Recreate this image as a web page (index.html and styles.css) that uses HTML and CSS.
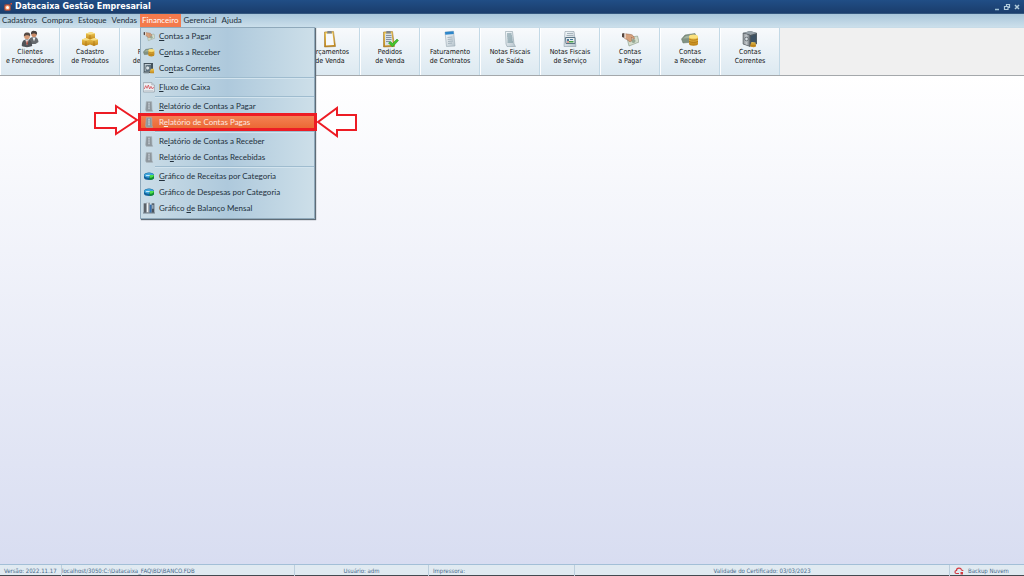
FILE: index.html
```html
<!DOCTYPE html>
<html lang="pt-BR">
<head>
    <meta charset="UTF-8">
    <meta name="viewport" content="width=device-width, initial-scale=1.0">
    <title>Datacaixa Gestão Empresarial</title>
    <link rel="stylesheet" href="styles.css">
</head>
<body>

<!-- Icons -->
<svg class="sprite" aria-hidden="true">
    <defs>
        <linearGradient id="gold" x1="0" y1="0" x2="0" y2="1">
            <stop offset="0" stop-color="#f3cd58"/>
            <stop offset="1" stop-color="#bf8418"/>
        </linearGradient>
        <linearGradient id="steel" x1="0" y1="0" x2="1" y2="0">
            <stop offset="0" stop-color="#8d9297"/>
            <stop offset="0.5" stop-color="#c3c8cc"/>
            <stop offset="1" stop-color="#696f75"/>
        </linearGradient>
        <linearGradient id="page" x1="0" y1="0" x2="1" y2="1">
            <stop offset="0" stop-color="#f8fbfd"/>
            <stop offset="1" stop-color="#b5c3cc"/>
        </linearGradient>
    </defs>
    <symbol id="i-people" viewBox="0 0 18 18">
        <path d="M7.500 12C8 8 10 7 13 7s4 1.500 4.500 5l-3 2H8z" fill="#66696d"/>
        <path d="M11.500 7.500l1.500 4 1.500-4z" fill="#eef2f4"/>
        <circle cx="13" cy="4.500" r="2.600" fill="#c98a66"/>
        <path d="M10 4.500C9.500 1 12 .5 13.500 1c2.500 0 3 2 2.300 4C15 3.500 12 3 10 4.500z" fill="#48403c"/>
        <path d="M.8 16c0-4.500 1.500-6.500 5-6.500s5.200 2 5.400 6.500c-3 1.500-7.500 1.500-10.400 0z" fill="#505358"/>
        <path d="M4.500 10l1.500 5.500L7.500 10z" fill="#f4f6f7"/>
        <path d="M5.700 10.500h.8l.4 3-.8 2-.8-2z" fill="#a43c2e"/>
        <circle cx="6" cy="6.500" r="2.800" fill="#d69b77"/>
        <path d="M2.900 6.500C2.500 3 4.500 2 6.500 2.500c2.500 0 3.200 2 2.500 4C8 5 5 4.500 2.900 6.500z" fill="#544944"/>
    </symbol>
    <symbol id="i-boxes" viewBox="0 0 18 18">
        <path d="M5 3.500l5-1.500 4 1.500v5L9 10 5 8.500z" fill="url(#gold)"/>
        <path d="M5 3.500l4 1.300 5-1.300-4-1.500z" fill="#f8df86"/>
        <path d="M9 4.800V10" stroke="#a66c0a" stroke-width=".6"/>
        <path d="M1 9.500L5 8l4 1.500v5L5 16l-4-1.500z" fill="url(#gold)"/>
        <path d="M1 9.500l4 1.200 4-1.200L5 8z" fill="#f8df86"/>
        <path d="M9 9.500L13.500 8 17 9.500v5L13 16l-4-1.500z" fill="url(#gold)"/>
        <path d="M9 9.500l4 1.200 4-1.200L13.500 8z" fill="#f8df86"/>
        <path d="M5 10.700V16M13 10.700V16" stroke="#a66c0a" stroke-width=".6"/>
    </symbol>
    <symbol id="i-clipboard" viewBox="0 0 18 18">
        <path d="M3.500 2l9-.5 2 15-11 .5z" fill="url(#gold)" stroke="#94691c" stroke-width=".5"/>
        <path d="M5 3.500l6.500-.3 1.500 11.800-8 .5z" fill="#f7f9fb"/>
        <path d="M6.500 1h4l.5 2.500H6z" fill="#80858a"/>
    </symbol>
    <symbol id="i-order" viewBox="0 0 18 18">
        <path d="M2.500 2l9-.5 2 15-11 .5z" fill="url(#gold)" stroke="#94691c" stroke-width=".5"/>
        <path d="M4 3.500l6.500-.3 1.500 11.800-8 .5z" fill="#d8e0e6"/>
        <path d="M5 5.500h5.500M5 7.500h5.500M5 9.500h5.500M5 11.500h4" stroke="#8793a0"/>
        <path d="M5.500 1h4l.5 2.500H5z" fill="#80858a"/>
        <path d="M7.500 13l2-1.500 2 2L16 9l1.500 1.500-6 6.500z" fill="#43c42c" stroke="#238a17" stroke-width=".5"/>
    </symbol>
    <symbol id="i-contract" viewBox="0 0 18 18">
        <path d="M4 2l8.500-.8 1.500 14.800-8.500.5z" fill="url(#page)" stroke="#9aa9b4" stroke-width=".6"/>
        <path d="M4 2l8.500-.8.3 2.800-8.500.8z" fill="#2d86ca"/>
        <path d="M6.500 7.500l5-.5M6.700 9.500l5-.5M7 11.500l5-.5M7 13.500l4-.4" stroke="#9babb6" stroke-width=".8"/>
    </symbol>
    <symbol id="i-invoice" viewBox="0 0 18 18">
        <path d="M4.500 1.500h7L13 14l1.500 2.500H6L5 14z" fill="url(#page)" stroke="#8fa1aa" stroke-width=".6"/>
        <path d="M6 4h4.500M6 6h5M6.300 8h5M6.500 10h5M6.500 12h5.500" stroke="#668892"/>
    </symbol>
    <symbol id="i-service" viewBox="0 0 18 18">
        <path d="M4 1.500h9l2 15H3z" fill="url(#page)" stroke="#8e9da8" stroke-width=".6"/>
        <path d="M6 3.500h6M5.500 5.500h7" stroke="#a7b4bc"/>
        <path d="M4.500 7.500h9.500v6H5z" fill="#e9eff2" stroke="#5b7585"/>
        <path d="M6 9h2v2H6zM9 9h3v1H9z" fill="#47799c"/>
        <path d="M8 11h4.500v1.500H8z" fill="#4aa24b"/>
        <path d="M6 11.500h2v1H6z" fill="#c84a3c"/>
    </symbol>
    <symbol id="i-pay" viewBox="0 0 18 18">
        <path d="M6 8l10.500-2L18 12l-10 4z" fill="#d5dfcf" stroke="#849583" stroke-width=".6"/>
        <circle cx="12.500" cy="11" r="2" fill="#96a994"/>
        <path d="M3.500 3.500L6 4l4 .5c2 .5 3 2 3.500 4l-1 .5-2-2 .5 3.500-2 1.500-3-2.500-2.500-1z" fill="#d6a17c" stroke="#936248" stroke-width=".5"/>
        <path d="M1 3.500l2.500-.5v5L1 7z" fill="#54463f"/>
        <path d="M3.500 3h1v5.500h-1z" fill="#fff"/>
    </symbol>
    <symbol id="i-receive" viewBox="0 0 18 18">
        <path d="M.5 9L4 5l10-1.500 2 4L12 12l-10 1z" fill="#819283" stroke="#607161" stroke-width=".5"/>
        <path d="M2 8.500l3-2.500 8-1-2.500 3z" fill="#a3b29e"/>
        <ellipse cx="12.500" cy="13.500" rx="4.500" ry="2.200" fill="#bd8010"/>
        <path d="M8 6.500h9v7c-2 2-7 2-9 0z" fill="url(#gold)"/>
        <path d="M8 9c2 1.500 7 1.500 9 0M8 11.300c2 1.500 7 1.500 9 0" stroke="#a76c0c" stroke-width=".7" fill="none"/>
        <ellipse cx="12.500" cy="6.500" rx="4.500" ry="2" fill="#fae17e"/>
    </symbol>
    <symbol id="i-safe" viewBox="0 0 18 18">
        <path d="M2 3l7-2 7 2v11l-7 2.500L2 14z" fill="#505a61"/>
        <path d="M2 3l7-2 7 2-7 2z" fill="#99a3aa"/>
        <path d="M2 3l7 2v11.500L2 14z" fill="url(#steel)" stroke="#42494f" stroke-width=".5"/>
        <path d="M10 6l5-1.500V13l-5 2z" fill="#3c5163"/>
        <circle cx="5.500" cy="9" r="1.800" fill="#dbe1e5" stroke="#4d565d" stroke-width=".7"/>
        <path d="M9 16l1.500-4 4 .5.5 4c-1.500 1-4.500 1-6-.5z" fill="url(#gold)"/>
        <path d="M9.500 14h5M9 15.500h6" stroke="#a76c0c" stroke-width=".5"/>
    </symbol>
    <symbol id="i-account" viewBox="0 0 18 18">
        <path d="M1 1.500h14v15H1z" fill="#43525c"/>
        <path d="M2.500 3h9.500v11H2.500z" fill="#c0ccd2"/>
        <path d="M4 5l8-1v9l-8 1z" fill="#5b707e"/>
        <circle cx="7" cy="9" r="3" fill="#d7e1e6" stroke="#5e6b73"/>
        <path d="M12 10h4.500v7H11l-1-2z" fill="url(#gold)"/>
        <path d="M1 15h8v2H1z" fill="#78868e"/>
    </symbol>
    <symbol id="i-flow" viewBox="0 0 18 18">
        <path d="M.5 2.500h12.500l4 3.500v10.500H.5z" fill="#edf0f3" stroke="#8a949f"/>
        <path d="M13 2.500V6h4" fill="#cbd3da" stroke="#8a949f" stroke-width=".6"/>
        <path d="M2 12l2-5 2 4 2-5 2 6 2-4 2 4 2-3" fill="none" stroke="#d4525a" stroke-width="1.200"/>
        <path d="M2 14.500h13" stroke="#9ba8b5" stroke-width=".8"/>
    </symbol>
    <symbol id="i-report" viewBox="0 0 18 18">
        <path d="M5 2.500h8l.5 12 1 2.500H5l-1-2z" fill="#8d969c" stroke="#a3adb4" stroke-width="1"/>
        <path d="M7.500 4h3v10h-3z" fill="#bac3c9"/>
        <path d="M7 6.500h4M7 9h4M7 11.500h4" stroke="#8b959c" stroke-width=".8"/>
    </symbol>
    <symbol id="i-pie" viewBox="0 0 18 18">
        <path d="M1.500 8c0-5.500 15-5.500 15 0v3.500c0 4.500-15 4.500-15 0z" fill="#12629b"/>
        <path d="M2 8c0-4.500 14-4.500 14 0l-7 3.500C5 11.500 2 10 2 8z" fill="#42a8de"/>
        <path d="M10 8h6.500v3.500c0 2-2.500 3.200-6.500 3.500z" fill="#128c31"/>
        <path d="M10 7.500h6.500c0 2.500-2.500 4-5.500 4.500z" fill="#4ee04c"/>
        <path d="M4 9h6V7.500H5z" fill="#c5eafb"/>
    </symbol>
    <symbol id="i-balance" viewBox="0 0 18 18">
        <path d="M1 2h4v14H1z" fill="#5b6269"/>
        <path d="M5 1h5v15H5z" fill="url(#steel)"/>
        <path d="M6 2h1.500v13H6z" fill="#eef3f6"/>
        <path d="M10 4h3v12h-3z" fill="#3470b1"/>
        <path d="M13 2h4v14h-4z" fill="#4a545e"/>
        <path d="M13.800 4h2v6h-2z" fill="#a9bdcd"/>
        <path d="M0 16h18v1H0z" fill="#424b54"/>
    </symbol>
</svg>

<div class="app">
    <header class="titlebar">
        <svg class="logo" viewBox="0 0 10 10" aria-hidden="true">
            <rect x="1" y="2" width="7" height="7" rx="2" fill="#8d4a48"/>
            <circle cx="4.500" cy="5.500" r="2.600" fill="#f08a5c"/>
            <circle cx="4.500" cy="5.500" r="1.500" fill="#fff"/>
            <path d="M7.500 1h1.500v1.500H7.500z" fill="#dd4c30"/>
        </svg>
        <h1>Datacaixa Gestão Empresarial</h1>
        <div class="window-buttons">
            <button type="button" aria-label="Minimizar"><svg viewBox="0 0 8 8"><path d="M2 6.500h4" stroke="#9ec0d4" stroke-width="1.500"/></svg></button>
            <button type="button" aria-label="Restaurar"><svg viewBox="0 0 8 8"><path d="M3.500 3V1.500h3v3H5.500M1.500 3.500h3.500v3H1.500z" fill="none" stroke="#b1cbdb" stroke-width="1.200"/></svg></button>
            <button type="button" aria-label="Fechar"><svg viewBox="0 0 8 8"><path d="M2 2l4 4M6 2L2 6" stroke="#b1cbdb" stroke-width="1.500"/></svg></button>
        </div>
    </header>

    <nav class="menubar">
        <ul>
            <li><button type="button">Cadastros</button></li>
            <li><button type="button">Compras</button></li>
            <li><button type="button">Estoque</button></li>
            <li><button type="button">Vendas</button></li>
            <li class="open">
                <button type="button" aria-expanded="true">Financeiro</button>
                <ul class="dropdown">
                    <li><button type="button"><svg><use href="#i-pay"/></svg><span><u>C</u>ontas a Pagar</span></button></li>
                    <li><button type="button"><svg><use href="#i-receive"/></svg><span>C<u>o</u>ntas a Receber</span></button></li>
                    <li><button type="button"><svg><use href="#i-account"/></svg><span>Co<u>n</u>tas Correntes</span></button></li>
                    <li class="separator"></li>
                    <li><button type="button"><svg><use href="#i-flow"/></svg><span><u>F</u>luxo de Caixa</span></button></li>
                    <li class="separator"></li>
                    <li><button type="button"><svg><use href="#i-report"/></svg><span><u>R</u>elatório de Contas a Pagar</span></button></li>
                    <li class="selected">
                        <button type="button"><svg><use href="#i-report"/></svg><span>R<u>e</u>latório de Contas Pagas</span></button>
                        <svg class="arrow arrow-left" viewBox="0 0 46 34" aria-hidden="true"><path d="M2 9h21V2l21 14-21 14v-6H2z"/></svg>
                        <svg class="arrow arrow-right" viewBox="0 0 42 34" aria-hidden="true"><path d="M40 11v15H21v6L2 18 21 4v7z"/></svg>
                    </li>
                    <li class="separator"></li>
                    <li><button type="button"><svg><use href="#i-report"/></svg><span>Re<u>l</u>atório de Contas a Receber</span></button></li>
                    <li><button type="button"><svg><use href="#i-report"/></svg><span>Rel<u>a</u>tório de Contas Recebidas</span></button></li>
                    <li class="separator"></li>
                    <li><button type="button"><svg><use href="#i-pie"/></svg><span><u>G</u>ráfico de Receitas por Categoria</span></button></li>
                    <li><button type="button"><svg><use href="#i-pie"/></svg><span>Gráf<u>i</u>co de Despesas por Categoria</span></button></li>
                    <li><button type="button"><svg><use href="#i-balance"/></svg><span>Gráfico <u>d</u>e Balanço Mensal</span></button></li>
                </ul>
            </li>
            <li><button type="button">Gerencial</button></li>
            <li><button type="button">Ajuda</button></li>
        </ul>
    </nav>

    <div class="toolbar">
        <button type="button"><svg><use href="#i-people"/></svg>Clientes<br>e Fornecedores</button>
        <button type="button"><svg><use href="#i-boxes"/></svg>Cadastro<br>de Produtos</button>
        <button type="button"><svg><use href="#i-order"/></svg>Pedidos<br>de Compra</button>
        <button type="button" aria-label="Notas de Entrada"><svg><use href="#i-invoice"/></svg></button>
        <button type="button" aria-label="Controle de Estoque"><svg><use href="#i-boxes"/></svg></button>
        <button type="button"><svg><use href="#i-clipboard"/></svg>Orçamentos<br>de Venda</button>
        <button type="button"><svg><use href="#i-order"/></svg>Pedidos<br>de Venda</button>
        <button type="button"><svg><use href="#i-contract"/></svg>Faturamento<br>de Contratos</button>
        <button type="button"><svg><use href="#i-invoice"/></svg>Notas Fiscais<br>de Saída</button>
        <button type="button"><svg><use href="#i-service"/></svg>Notas Fiscais<br>de Serviço</button>
        <button type="button"><svg><use href="#i-pay"/></svg>Contas<br>a Pagar</button>
        <button type="button"><svg><use href="#i-receive"/></svg>Contas<br>a Receber</button>
        <button type="button"><svg><use href="#i-safe"/></svg>Contas<br>Correntes</button>
    </div>

    <main class="workspace"></main>

    <footer class="statusbar">
        <span class="version">Versão: 2022.11.17</span>
        <span class="database">localhost/3050:C:\Datacaixa_FAQ\BD\BANCO.FDB</span>
        <span class="user">Usuário: adm</span>
        <span class="printer">Impressora:</span>
        <span class="certificate">Validade do Certificado: 03/03/2023</span>
        <a class="backup" href="#">
            <svg viewBox="0 0 10 8" aria-hidden="true"><path d="M5 6.500H2.500C.5 6.500.5 3.500 2.500 3.500 2.500.5 7 .5 7.500 3c1 0 1.500.5 1.500 1" fill="none" stroke="#d33a41" stroke-width="1.200"/><path d="M6.500 5H9v2.500H6.500z" fill="#d33a41"/></svg>
            Backup Nuvem
        </a>
    </footer>
</div>

</body>
</html>
```
FILE: styles.css
```css
* {
    box-sizing: border-box;
}

body {
    margin: 0;
    font-family: Lato, "Open Sans", sans-serif;
    font-size: 8px;
    color: #22303c;
}

button {
    margin: 0;
    padding: 0;
    border: none;
    background: none;
    font: inherit;
    color: inherit;
    cursor: pointer;
}

ul {
    margin: 0;
    padding: 0;
    list-style: none;
}

.sprite {
    position: absolute;
    width: 0;
    height: 0;
}

.app {
    display: flex;
    flex-direction: column;
    min-height: 100vh;
}

/* Title bar */
.titlebar {
    display: flex;
    align-items: center;
    gap: 2px;
    height: 14px;
    padding: 0 3px;
    background: linear-gradient(#214e86, #1a3d6c);
    border-bottom: 1px solid #33577f;
    color: #fff;
}

.titlebar h1 {
    flex: 1;
    margin: 0;
    font-family: "DejaVu Sans", sans-serif;
    font-size: 8px;
    line-height: 12px;
}

.logo {
    width: 10px;
    height: 10px;
}

.window-buttons {
    display: flex;
    gap: 2px;
}

.window-buttons button,
.window-buttons svg {
    display: block;
    width: 8px;
    height: 8px;
}

/* Menu bar */
.menubar {
    height: 13px;
    background: linear-gradient(#a9c6da, #cbdfeb);
}

.menubar > ul {
    display: flex;
    gap: 1px;
}

.menubar > ul > li {
    position: relative;
}

.menubar > ul > li > button {
    display: block;
    height: 13px;
    padding: 0 2px;
    line-height: 13px;
}

.menubar > ul > .open > button {
    background: #f47a4c;
    color: #fff;
}

.dropdown {
    position: absolute;
    top: 13px;
    left: 0;
    z-index: 10;
    width: 175px;
    padding-bottom: 2px;
    border: 1px solid #8fa9bb;
    background: linear-gradient(to right, #cbdde7, #aec9dc 50%, #cddfe9);
    box-shadow: 1px 1px 1px #5f6c76;
}

.dropdown li {
    position: relative;
}

.dropdown button {
    display: flex;
    align-items: center;
    gap: 4px;
    width: 100%;
    height: 16px;
    padding: 0 2px;
    line-height: 10px;
    text-align: left;
    white-space: nowrap;
}

.dropdown button svg {
    width: 12px;
    height: 12px;
}

.dropdown .separator {
    height: 3px;
    margin-left: 14px;
    border-bottom: 1px solid #d3e4ee;
    box-shadow: inset 0 -1px #9fbccf;
}

.dropdown .selected {
    margin: 0 -2px;
    outline: 3px solid #ed1c24;
    outline-offset: -2px;
    background: linear-gradient(#f58458, #ea6530);
    color: #fbe9e0;
}

.dropdown .selected button {
    padding: 0 4px;
}

.arrow {
    position: absolute;
    top: -10px;
    height: 34px;
    fill: #fff;
    stroke: #ed1c24;
    stroke-width: 2;
}

.arrow-left {
    right: 100%;
    width: 46px;
}

.arrow-right {
    left: 100%;
    width: 42px;
}

/* Toolbar */
.toolbar {
    display: flex;
    height: 49px;
    background: #f0f0f0;
    border-top: 1px solid #c8dce8;
    border-bottom: 1px solid #a4a8ab;
    font-family: "DejaVu Sans Condensed", "DejaVu Sans", sans-serif;
    font-size: 7px;
    line-height: 9px;
}

.toolbar button {
    flex: 0 0 60px;
    padding-bottom: 7px;
    border-right: 1px solid #c3d9e6;
    border-left: 1px solid #fff;
    background: linear-gradient(#f8fafc, #dce9f1);
    color: #111;
    white-space: nowrap;
}

.toolbar svg {
    display: block;
    width: 18px;
    height: 18px;
    margin: 0 auto;
}

/* Workspace */
.workspace {
    flex: 1;
    background: linear-gradient(#fff, #d8ddf1);
}

/* Status bar */
.statusbar {
    display: grid;
    grid-template-columns: 62fr 233fr 134fr 146fr 375fr 74fr;
    height: 12px;
    border-top: 1px solid #a3bfd7;
    border-bottom: 1px solid #444a50;
    background: #e0eaf1;
    color: #47698a;
    font-family: "DejaVu Sans Condensed", "DejaVu Sans", sans-serif;
    font-size: 6px;
    line-height: 11px;
    white-space: nowrap;
}

.statusbar > * {
    padding: 0 4px;
    border-right: 1px solid #bccfdd;
}

.statusbar .database {
    padding: 0;
}

.statusbar .user,
.statusbar .certificate {
    text-align: center;
}

.statusbar .backup {
    display: flex;
    align-items: center;
    gap: 4px;
    border-right: none;
    color: inherit;
    text-decoration: none;
}

.backup svg {
    width: 10px;
    height: 8px;
}
```
